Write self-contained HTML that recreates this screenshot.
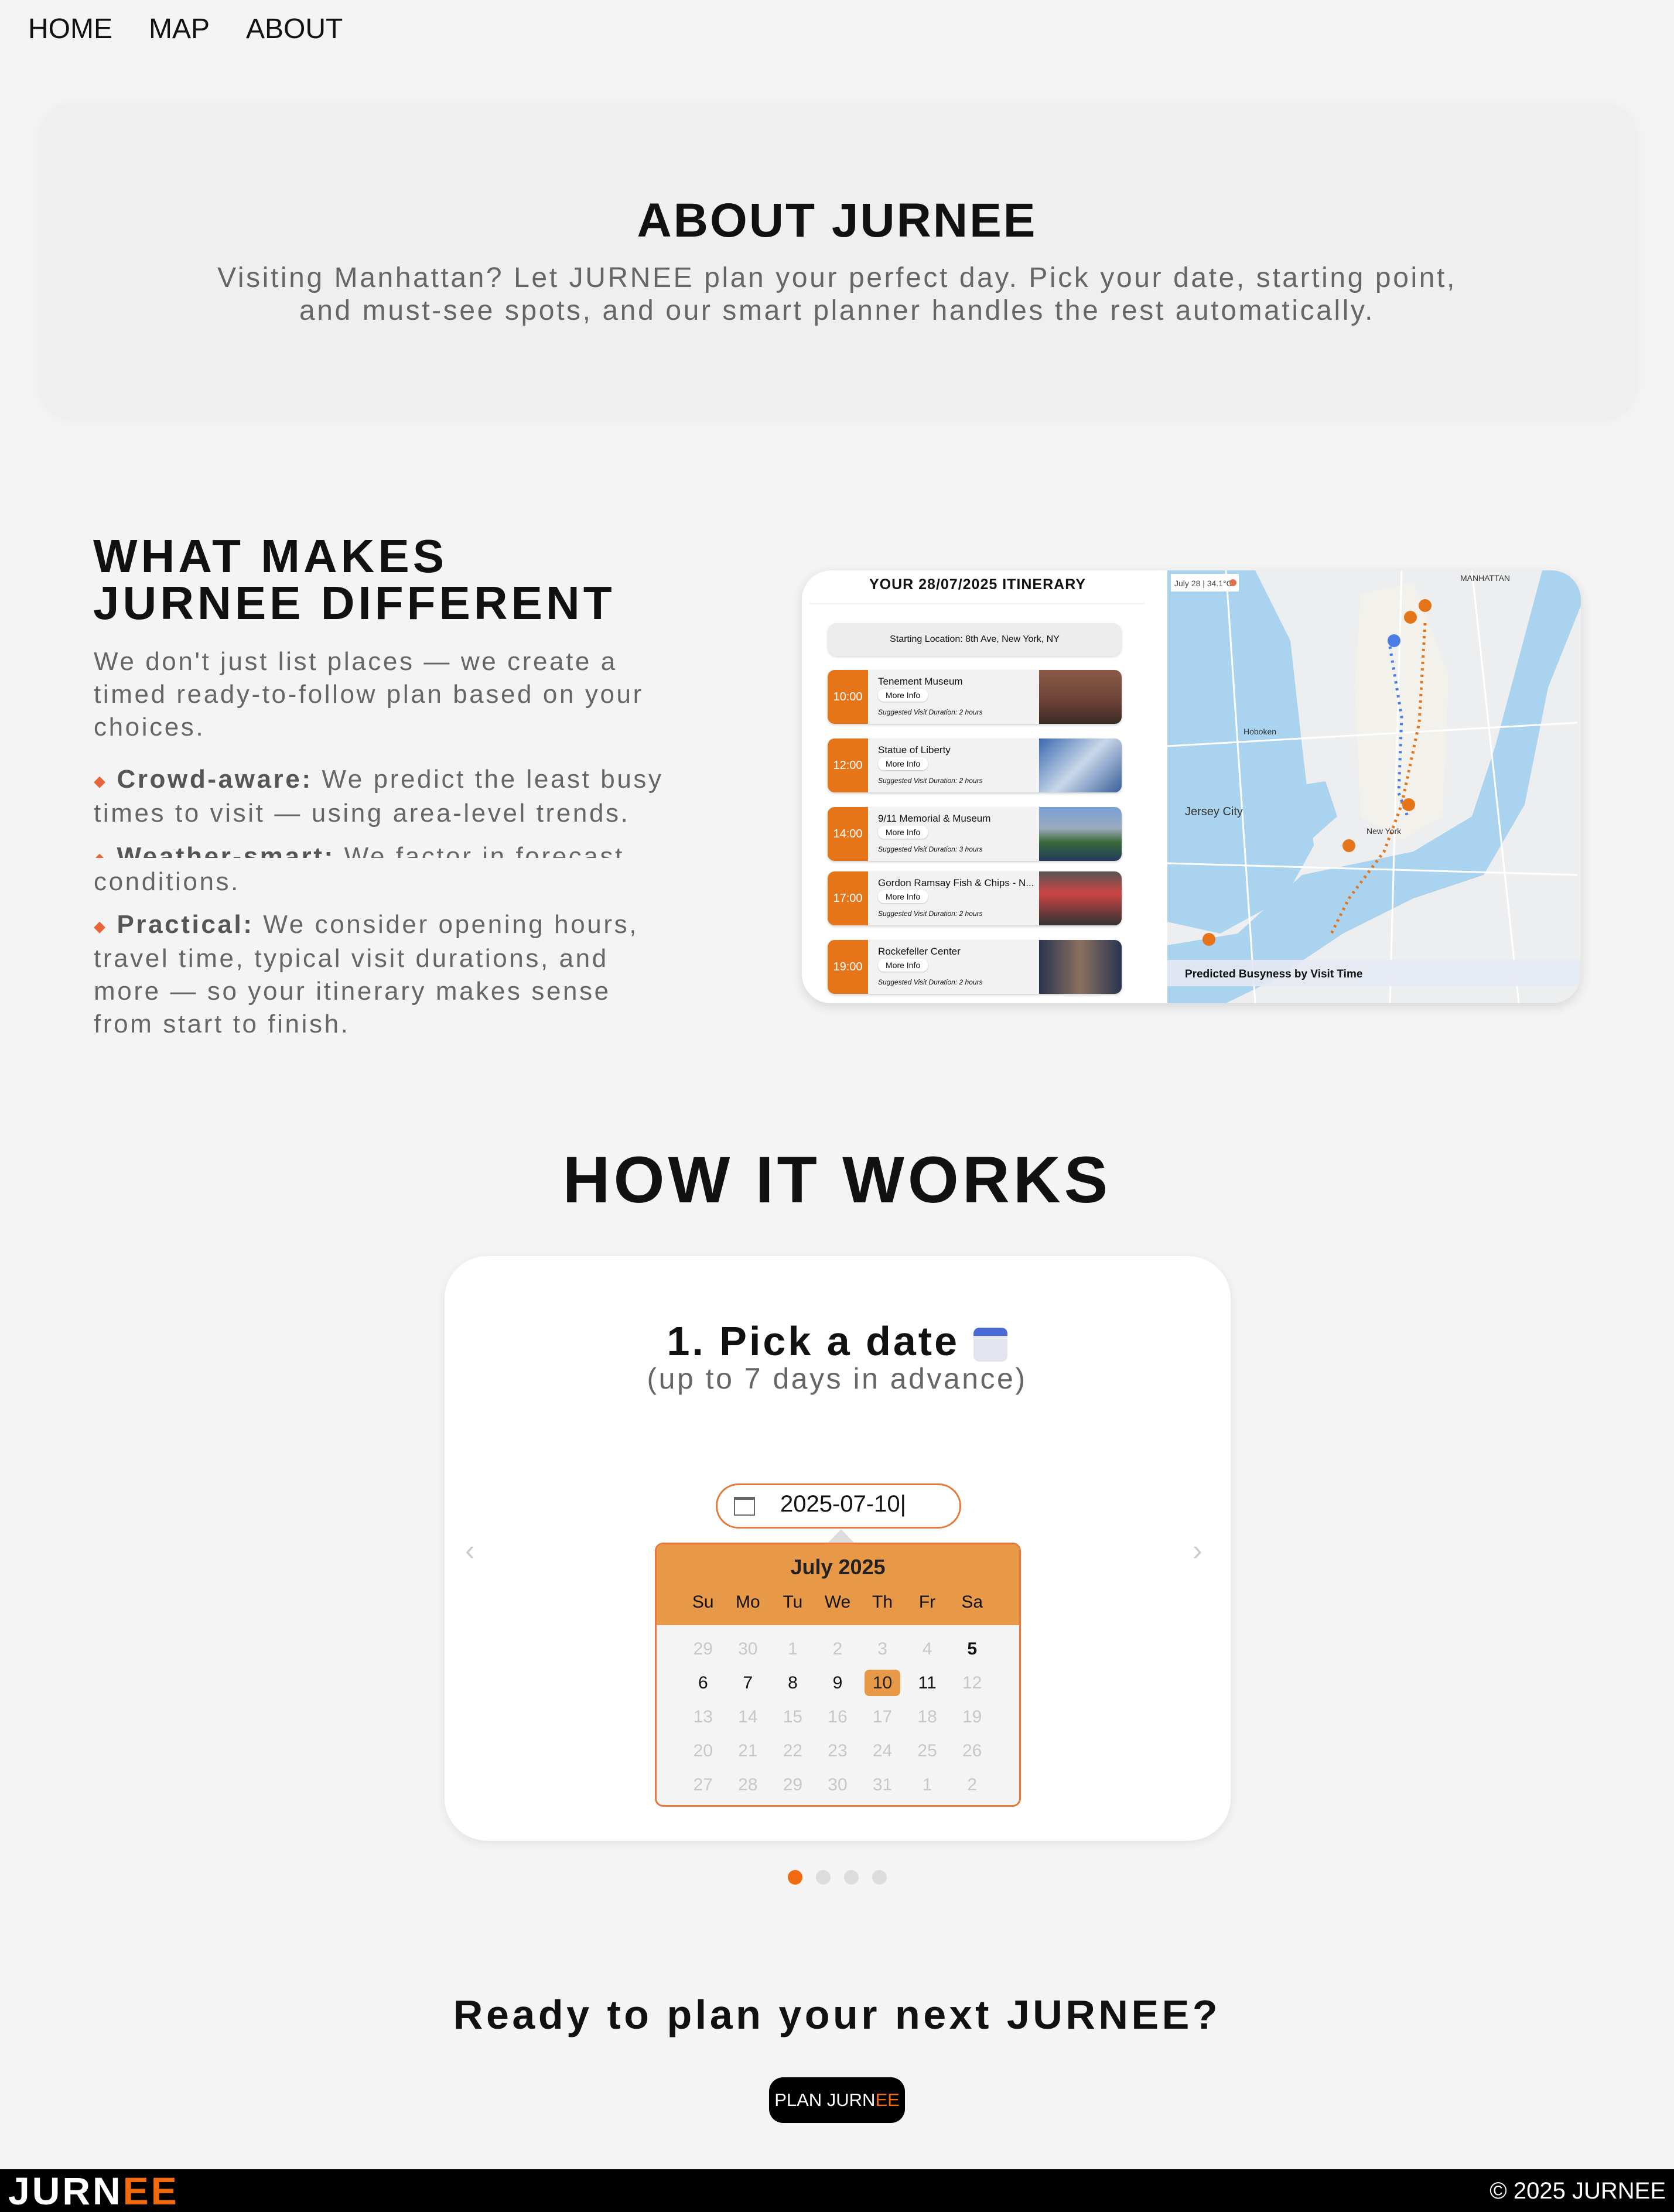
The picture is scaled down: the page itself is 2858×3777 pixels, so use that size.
<!DOCTYPE html>
<html><head><meta charset="utf-8">
<style>
*{margin:0;padding:0;box-sizing:border-box}
html,body{width:2858px;height:3777px;overflow:hidden;background:#f4f4f4;font-family:"Liberation Sans",sans-serif;color:#111;position:relative}
.abs{position:absolute}
.nav{top:22px;left:48px;font-size:48px;color:#111}
.nav span{margin-right:62px}
.about{left:65px;top:176px;width:2731px;height:542px;background:#efefef;border-radius:60px;box-shadow:0 0 30px rgba(0,0,0,0.03)}
.h{font-weight:bold;letter-spacing:3px}
.c{text-align:center;left:0;width:2858px}
.gray{color:#666}
.p{font-size:44px;line-height:56px;color:#666;letter-spacing:3.6px;white-space:nowrap}
.p b{color:#555}
.dot{color:#e8663a;font-size:26px;vertical-align:middle}
.shot{left:1369px;top:974px;width:1330px;height:739px;border-radius:50px;overflow:hidden;background:#fff;box-shadow:0 6px 20px rgba(0,0,0,0.12)}
.card{position:absolute;left:44px;width:502px;height:92px;background:#f2f2f2;border-radius:12px;overflow:hidden;box-shadow:0 2px 4px rgba(0,0,0,0.2)}
.card .t{position:absolute;left:0;top:0;width:69px;height:92px;background:#e6751a;color:#fff;font-size:20px;line-height:92px;text-align:center}
.card .n{position:absolute;left:86px;top:10px;font-size:17px}
.card .m{position:absolute;left:86px;top:32px;font-size:14px;background:#fff;border-radius:10px;padding:3px 13px;box-shadow:0 1px 2px rgba(0,0,0,.2)}
.card .s{position:absolute;left:86px;top:65px;font-size:12px;font-style:italic}
.card .i{position:absolute;right:0;top:0;width:141px;height:92px}
.how{left:759px;top:2145px;width:1342px;height:998px;background:#fff;border-radius:72px;box-shadow:0 4px 16px rgba(0,0,0,0.08)}
.cal{left:1118px;top:2634px;width:625px;height:451px;border:3px solid #e6793a;border-radius:14px;background:#f4f4f4;overflow:hidden}
.cal .hd{height:138px;background:#e89947}
.cal table{border-collapse:collapse;position:absolute;left:41px;width:536px;table-layout:fixed;font-size:30px;text-align:center}
.cal td{height:58px;color:#c8c8c8;padding:0}
.cal td.k{color:#111}
</style></head><body>
<div class="abs nav"><span>HOME</span><span>MAP</span><span>ABOUT</span></div>

<div class="abs about"></div>
<div class="abs c h" style="top:330px;font-size:82px">ABOUT JURNEE</div>
<div class="abs c gray" style="top:447px;font-size:48px;line-height:56px;letter-spacing:3.6px">Visiting Manhattan? Let JURNEE plan your perfect day. Pick your date, starting point,<br>and must-see spots, and our smart planner handles the rest automatically.</div>

<div class="abs h" style="left:159px;top:910px;font-size:80px;line-height:80px;letter-spacing:6px">WHAT MAKES<br>JURNEE DIFFERENT</div>
<div class="abs p" style="left:160px;top:1102px">We don't just list places — we create a<br>timed ready-to-follow plan based on your<br>choices.</div>
<div class="abs p" style="left:160px;top:1303px"><span class="dot">◆</span> <b>Crowd-aware:</b> We predict the least busy<br>times to visit — using area-level trends.</div>
<div class="abs p" style="left:160px;top:1435px;height:30px;overflow:hidden"><span class="dot">◆</span> <b>Weather-smart:</b> We factor in forecast</div>
<div class="abs p" style="left:160px;top:1478px">conditions.</div>
<div class="abs p" style="left:160px;top:1551px"><span class="dot">◆</span> <b>Practical:</b> We consider opening hours,<br>travel time, typical visit durations, and<br>more — so your itinerary makes sense<br>from start to finish.</div>

<div class="abs shot">
 <div class="abs" style="left:0;top:0;width:624px;height:739px;background:#fff">
  <div class="abs" style="left:0;width:600px;top:10px;text-align:center;font-size:25px;font-weight:bold;letter-spacing:1px">YOUR 28/07/2025 ITINERARY</div>
  <div class="abs" style="left:14px;top:56px;width:570px;height:2px;background:#eee"></div>
  <div class="abs" style="left:44px;top:90px;width:502px;height:56px;background:#ececec;border-radius:16px;box-shadow:0 2px 4px rgba(0,0,0,.15);text-align:center;line-height:56px;font-size:16px">Starting Location: 8th Ave, New York, NY</div>
  <div class="card" style="top:170px"><div class="t">10:00</div><div class="n">Tenement Museum</div><div class="m">More Info</div><div class="s">Suggested Visit Duration: 2 hours</div><div class="i" style="background:linear-gradient(#8a5a48,#6a4236 60%,#3a2a24)"></div></div>
  <div class="card" style="top:287px"><div class="t">12:00</div><div class="n">Statue of Liberty</div><div class="m">More Info</div><div class="s">Suggested Visit Duration: 2 hours</div><div class="i" style="background:linear-gradient(135deg,#3a6ab0,#c8d8ea 50%,#3a5f9a)"></div></div>
  <div class="card" style="top:404px"><div class="t">14:00</div><div class="n">9/11 Memorial &amp; Museum</div><div class="m">More Info</div><div class="s">Suggested Visit Duration: 3 hours</div><div class="i" style="background:linear-gradient(#7aa0d8,#9ab 40%,#3a6a3a 65%,#223a5a)"></div></div>
  <div class="card" style="top:514px"><div class="t">17:00</div><div class="n">Gordon Ramsay Fish &amp; Chips - N...</div><div class="m">More Info</div><div class="s">Suggested Visit Duration: 2 hours</div><div class="i" style="background:linear-gradient(#555,#c44 40%,#333)"></div></div>
  <div class="card" style="top:631px"><div class="t">19:00</div><div class="n">Rockefeller Center</div><div class="m">More Info</div><div class="s">Suggested Visit Duration: 2 hours</div><div class="i" style="background:linear-gradient(90deg,#2a3450,#8a7060 50%,#2a3450)"></div></div>
 </div>
 <svg class="abs" style="left:624px;top:0" width="706" height="739" viewBox="0 0 706 739">
  <rect width="706" height="739" fill="#eceeef"/>
  <path d="M0 0 L150 0 L210 120 L230 300 L250 470 L200 560 L90 620 L0 600Z" fill="#a9d3ee"/>
  <path d="M140 380 L270 360 L290 420 L200 500 L130 470Z" fill="#a9d3ee"/>
  <path d="M230 520 L420 480 L520 420 L560 300 L600 150 L640 0 L706 0 L706 60 L650 200 L610 400 L540 520 L420 560 L300 620 L180 700 L100 739 L0 739 L0 640 L120 620Z" fill="#a9d3ee"/>
  <path d="M330 40 L420 20 L480 180 L470 420 L400 460 L330 420 L320 200Z" fill="#f3f1ec"/>
  <g stroke="#fff" stroke-width="3" fill="none"><path d="M0 300 L700 260"/><path d="M100 0 L150 739"/><path d="M400 0 L380 739"/><path d="M520 0 L600 739"/><path d="M0 500 L700 520"/></g>
  <path d="M440 90 L430 260 L400 400 L370 480 L310 560 L280 620" stroke="#e6751a" stroke-width="5" stroke-dasharray="4 7" fill="none"/>
  <path d="M380 130 L400 250 L395 380 L410 420" stroke="#4a7de8" stroke-width="5" stroke-dasharray="4 8" fill="none"/>
  <g fill="#e6751a"><circle cx="440" cy="60" r="11"/><circle cx="415" cy="80" r="11"/><circle cx="412" cy="400" r="11"/><circle cx="310" cy="470" r="11"/><circle cx="71" cy="630" r="11"/></g>
  <circle cx="387" cy="120" r="11" fill="#4a7de8"/>
  <g font-family="Liberation Sans" font-size="14" fill="#333"><text x="500" y="18">MANHATTAN</text><text x="130" y="280">Hoboken</text><text x="30" y="418" font-size="20">Jersey City</text><text x="340" y="450">New York</text></g>
  <rect x="6" y="6" width="116" height="30" fill="#fff"/><text x="12" y="27" font-family="Liberation Sans" font-size="14" fill="#444">July 28 | 34.1°C</text><circle cx="112" cy="21" r="6" fill="#e07050"/>
  <rect x="0" y="665" width="706" height="45" fill="#e6e9f2" opacity=".9"/>
  <text x="30" y="695" font-family="Liberation Sans" font-size="19" font-weight="bold" fill="#111">Predicted Busyness by Visit Time</text>
 </svg>
</div>

<div class="abs c h" style="top:1950px;font-size:112px;letter-spacing:6px">HOW IT WORKS</div>
<div class="abs how"></div>
<div class="abs c h" style="top:2250px;font-size:70px;letter-spacing:4px">1. Pick a date <span style="display:inline-block;width:58px;height:58px;border-radius:10px;background:#e4e4f0;border-top:14px solid #4a6ad8;vertical-align:middle"></span></div>
<div class="abs c gray" style="top:2325px;font-size:50px;letter-spacing:3.5px">(up to 7 days in advance)</div>
<div class="abs" style="left:1222px;top:2533px;width:419px;height:77px;border:3px solid #e6793a;border-radius:40px;background:#fff"></div>
<div class="abs" style="left:1253px;top:2556px;width:36px;height:32px;border:2px solid #666;border-top-width:5px"></div>
<div class="abs" style="left:1332px;top:2546px;font-size:40px">2025-07-10|</div>
<div class="abs" style="left:794px;top:2618px;font-size:50px;color:#ccc">‹</div>
<div class="abs" style="left:2036px;top:2618px;font-size:50px;color:#ccc">›</div>
<div class="abs" style="left:1414px;top:2611px;width:0;height:0;border-left:22px solid transparent;border-right:22px solid transparent;border-bottom:23px solid #ddd"></div>
<div class="abs cal">
 <div class="hd"></div>
 <div class="abs" style="left:0;width:619px;top:18px;text-align:center;font-size:36px;font-weight:bold;color:#222">July 2025</div>
 <table style="top:70px"><tr><td class="k">Su</td><td class="k">Mo</td><td class="k">Tu</td><td class="k">We</td><td class="k">Th</td><td class="k">Fr</td><td class="k">Sa</td></tr></table>
 <table style="top:150px">
 <tr><td>29</td><td>30</td><td>1</td><td>2</td><td>3</td><td>4</td><td class="k" style="font-weight:bold">5</td></tr>
 <tr><td class="k">6</td><td class="k">7</td><td class="k">8</td><td class="k">9</td><td class="k"><span style="background:#e89947;border-radius:8px;padding:6px 14px;color:#222">10</span></td><td class="k">11</td><td>12</td></tr>
 <tr><td>13</td><td>14</td><td>15</td><td>16</td><td>17</td><td>18</td><td>19</td></tr>
 <tr><td>20</td><td>21</td><td>22</td><td>23</td><td>24</td><td>25</td><td>26</td></tr>
 <tr><td>27</td><td>28</td><td>29</td><td>30</td><td>31</td><td>1</td><td>2</td></tr>
 </table>
</div>
<div class="abs" style="left:1345px;top:3193px;width:25px;height:25px;border-radius:50%;background:#f26a0f"></div>
<div class="abs" style="left:1393px;top:3193px;width:25px;height:25px;border-radius:50%;background:#ddd"></div>
<div class="abs" style="left:1441px;top:3193px;width:25px;height:25px;border-radius:50%;background:#ddd"></div>
<div class="abs" style="left:1489px;top:3193px;width:25px;height:25px;border-radius:50%;background:#ddd"></div>

<div class="abs c h" style="top:3400px;font-size:70px;letter-spacing:5.5px">Ready to plan your next JURNEE?</div>
<div class="abs" style="left:1313px;top:3547px;width:232px;height:78px;background:#000;border-radius:24px;color:#fff;font-size:31px;line-height:78px;text-align:center;white-space:nowrap">PLAN JURN<span style="color:#f26a0f">EE</span></div>

<div class="abs" style="left:0;top:3704px;width:2858px;height:73px;background:#000"></div>
<div class="abs h" style="left:14px;top:3703px;font-size:66px;color:#fff;letter-spacing:4px">JURN<span style="color:#f26a0f">EE</span></div>
<div class="abs" style="right:14px;top:3719px;font-size:40px;color:#fff">© 2025 JURNEE</div>
</body></html>
